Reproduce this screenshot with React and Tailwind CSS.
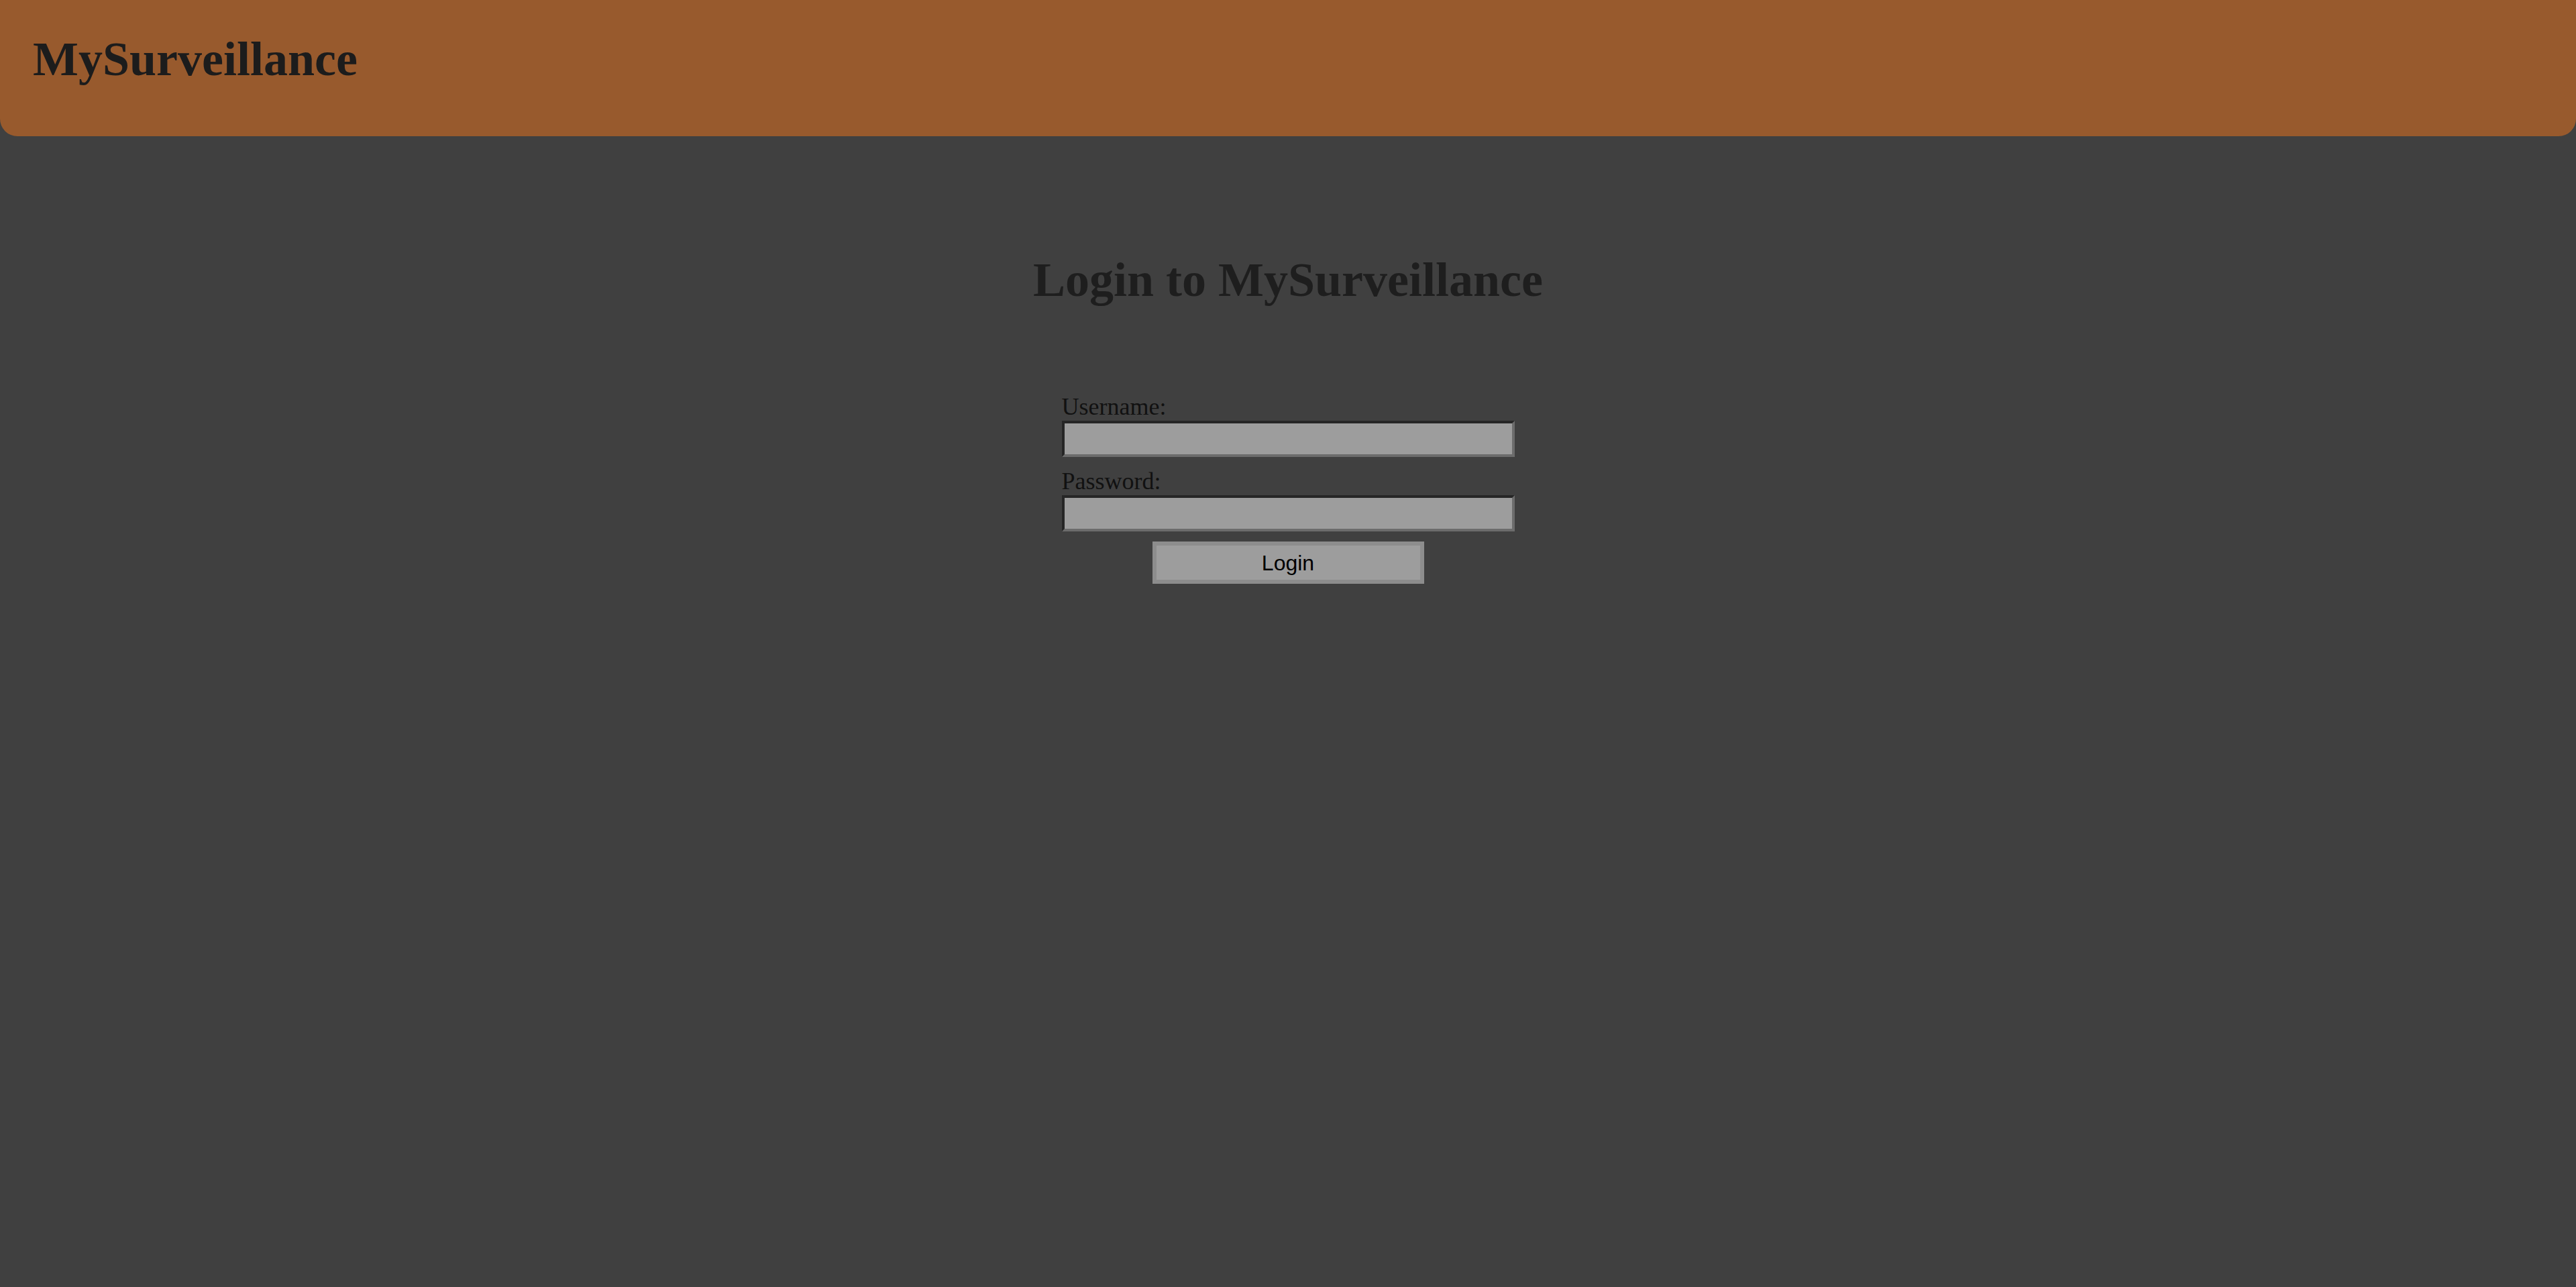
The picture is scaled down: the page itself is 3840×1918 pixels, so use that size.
export default function App() {
  return (
    <div className="min-h-[1918px] w-full bg-[#404040] [font-family:'Liberation_Serif',serif]">
      <header className="h-[203px] rounded-b-[26px] bg-[#985a2d] pl-[49px] pt-[47px]">
        <h1 className="m-0 text-[72px] font-bold leading-[83px] text-[#1c1c1c]">MySurveillance</h1>
      </header>
      <main className="flex flex-col items-center pt-[173px]">
        <h2 className="m-0 text-[72px] font-bold leading-[83px] text-[#1e1e1e]">Login to MySurveillance</h2>
        <form className="mt-[126px] flex w-[675px] flex-col" onSubmit={(e) => e.preventDefault()}>
          <label className="text-[36px] leading-[42px] text-[#111111]">Username:</label>
          <input
            type="text"
            className="h-[54px] w-[675px] border-4 border-t-[#262626] border-l-[#262626] border-b-[#6c6c6c] border-r-[#6c6c6c] bg-[#9d9d9d] outline-none"
          />
          <label className="mt-[15px] text-[36px] leading-[42px] text-[#111111]">Password:</label>
          <input
            type="password"
            className="h-[54px] w-[675px] border-4 border-t-[#262626] border-l-[#262626] border-b-[#6c6c6c] border-r-[#6c6c6c] bg-[#9d9d9d] outline-none"
          />
          <button
            type="submit"
            className="mx-auto mt-[15px] flex h-[63px] w-[405px] items-center justify-center border-[6px] border-[#8d8d8d] bg-[#9d9d9d] text-[32px] text-black [font-family:'Liberation_Sans',sans-serif]"
          >
            Login
          </button>
        </form>
      </main>
    </div>
  );
}
